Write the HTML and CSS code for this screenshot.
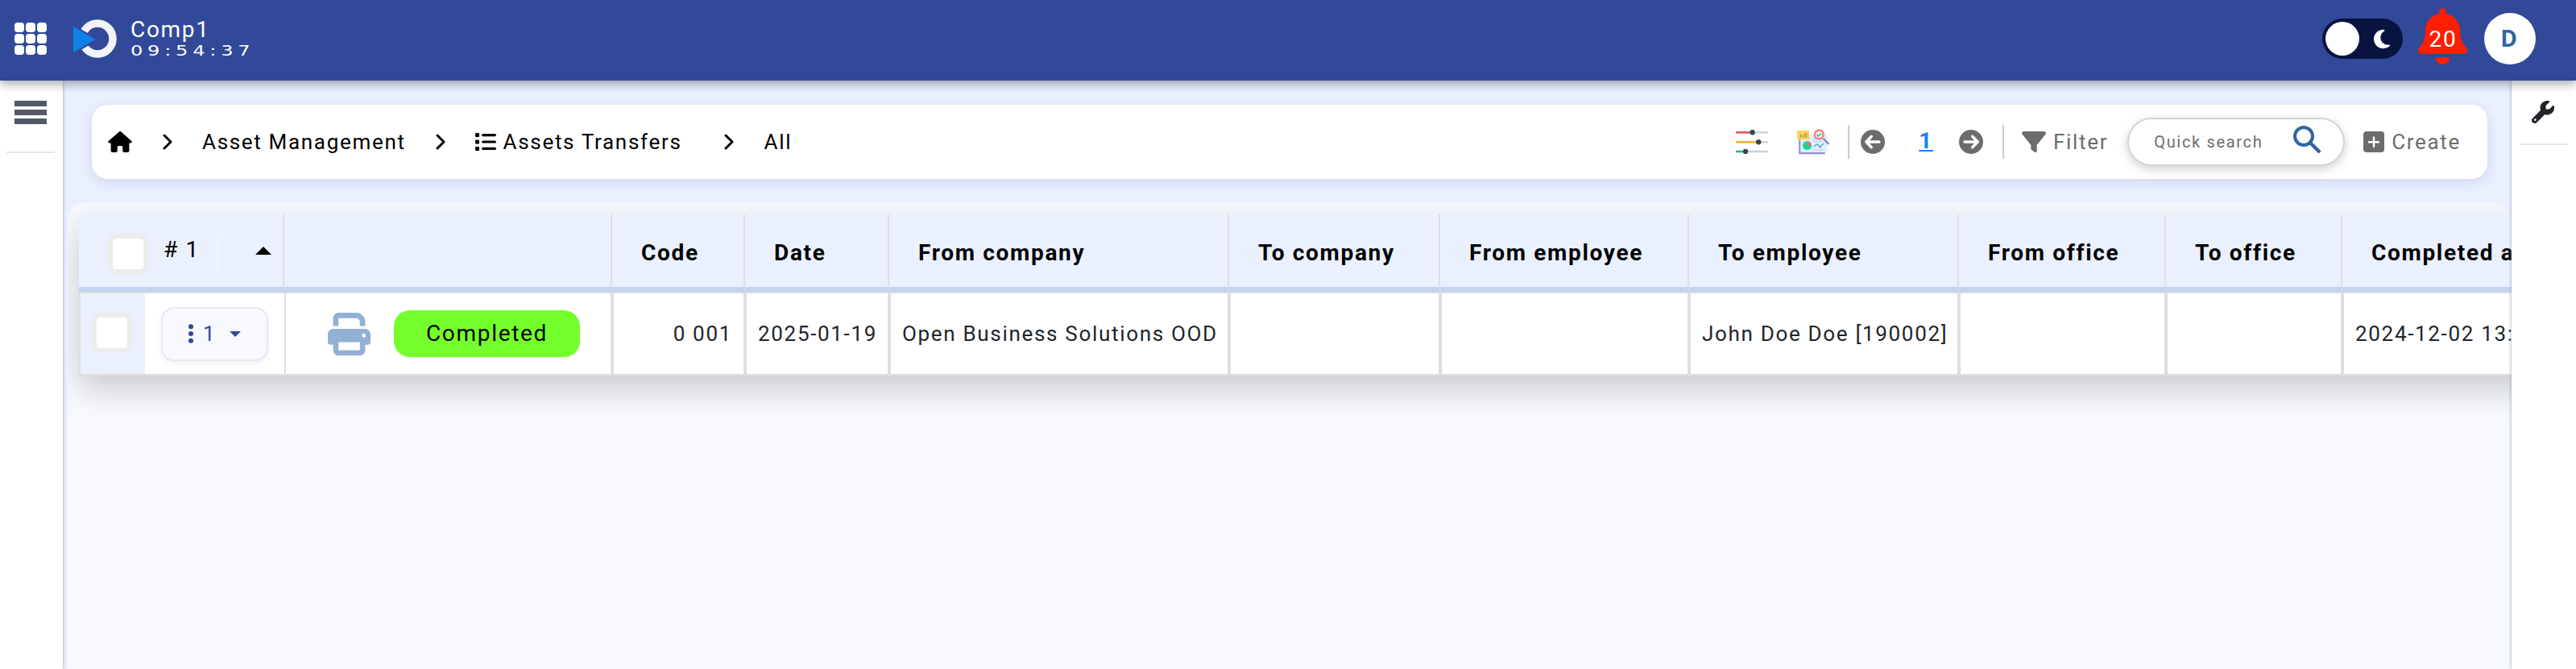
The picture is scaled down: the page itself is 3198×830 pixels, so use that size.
FILE: index.html
```html
<!DOCTYPE html>
<html lang="en">
  <head>
    <meta charset="UTF-8" />
    <meta name="viewport" content="width=device-width, initial-scale=1.0" />
    <title>Assets Transfers</title>
    <link rel="stylesheet" href="styles.css" />
  </head>
  <body>
    <header class="topbar">
      <svg class="apps" viewBox="0 0 40 40" fill="#fff">
        <rect x="0" y="0" width="12" height="12" rx="4" />
        <rect x="14" y="0" width="12" height="12" rx="4" />
        <rect x="28" y="0" width="12" height="12" rx="4" />
        <rect x="0" y="14" width="12" height="12" rx="4" />
        <rect x="14" y="14" width="12" height="12" rx="4" />
        <rect x="28" y="14" width="12" height="12" rx="4" />
        <rect x="0" y="28" width="12" height="12" rx="4" />
        <rect x="14" y="28" width="12" height="12" rx="4" />
        <rect x="28" y="28" width="12" height="12" rx="4" />
      </svg>
      <svg class="logo" viewBox="0 0 54 48">
        <circle cx="30" cy="24" r="19" fill="none" stroke="#f3f4f9" stroke-width="9.5" />
        <path d="M0 8.7 27.3 25 0 41.3z" fill="#324999" stroke="#324999" stroke-width="4" />
        <path d="M0 8.7 27.3 25 0 41.3z" fill="#1080e8" />
      </svg>
      <div class="brand">
        <span class="brand-name">Comp1</span>
        <span class="clock">09:54:37</span>
      </div>
      <div class="top-actions">
        <div class="toggle">
          <span class="knob"></span>
          <svg class="moon" viewBox="0 0 384 512" fill="#fff"><path d="M223.500 32C100 32 0 132.300 0 256S100 480 223.500 480c60.600 0 115.500-24.200 155.800-63.400c5-4.900 6.300-12.500 3.100-18.700s-10.100-9.700-17-8.500c-9.800 1.700-19.800 2.600-30.100 2.600c-96.900 0-175.500-78.800-175.500-176c0-65.800 36-123.100 89.300-153.300c6.100-3.500 9.200-10.500 7.700-17.300s-7.300-11.900-14.300-12.500c-6.300-.5-12.600-.8-19-.8z" /></svg>
        </div>
        <div class="bell">
          <svg viewBox="0 0 448 512" fill="#ff1e00"><path d="M224 0c-17.700 0-32 14.300-32 32l0 19.200C119 66 64 130.600 64 208l0 18.800c0 47-17.300 92.400-48.500 127.600l-7.400 8.300c-8.400 9.400-10.400 22.900-5.300 34.400S19.400 416 32 416l384 0c12.600 0 24-7.400 29.200-18.900s3.100-25-5.300-34.400l-7.400-8.300C401.300 319.200 384 273.900 384 226.800l0-18.800c0-77.400-55-142-128-156.800L256 32c0-17.700-14.300-32-32-32zm45.300 493.300c12-12 18.700-28.300 18.700-45.300l-64 0-64 0c0 17 6.700 33.300 18.700 45.300s28.300 18.700 45.300 18.700s33.300-6.700 45.300-18.700z" /></svg>
          <span class="bell-count">20</span>
        </div>
        <div class="avatar"><span>D</span></div>
      </div>
    </header>

    <div class="page">
      <aside class="side side-left">
        <div class="burger"><i></i><i></i><i></i></div>
        <hr />
      </aside>

      <main class="content">
        <nav class="toolbar">
          <div class="crumbs">
            <svg class="home" viewBox="0 0 576 512"><path d="M575.800 255.500c0 18-15 32.100-32 32.100l-32 0 .7 160.200c0 2.700-.2 5.400-.5 8.100l0 16.200c0 22.100-17.900 40-40 40l-16 0c-1.100 0-2.200 0-3.300-.1c-1.400 .1-2.800 .1-4.200 .1L416 512l-24 0c-22.100 0-40-17.900-40-40l0-24 0-64c0-17.700-14.300-32-32-32l-64 0c-17.700 0-32 14.300-32 32l0 64 0 24c0 22.100-17.900 40-40 40l-24 0-31.900 0c-1.500 0-3-.1-4.500-.2c-1.200 .1-2.400 .2-3.600 .2l-16 0c-22.100 0-40-17.900-40-40l0-112c0-.9 0-1.900 .1-2.800l0-69.700-32 0c-18 0-32-14-32-32.100c0-9 3-17 10-24L266.400 8c7-7 15-8 22-8s15 2 21 7L564.800 231.500c8 7 12 15 11 24z" /></svg>
            <svg class="chevron chevron-1" viewBox="0 0 12 20"><path d="M2 2l8 8-8 8" /></svg>
            <span class="crumb">Asset Management</span>
            <svg class="chevron chevron-2" viewBox="0 0 12 20"><path d="M2 2l8 8-8 8" /></svg>
            <svg class="list" viewBox="0 0 26 22">
              <rect x="0" y="0" width="5" height="5" rx="1" />
              <rect x="0" y="8.500" width="5" height="5" rx="1" />
              <rect x="0" y="17" width="5" height="5" rx="1" />
              <rect x="8" y="1" width="18" height="3.200" rx="1.600" />
              <rect x="8" y="9.400" width="18" height="3.200" rx="1.600" />
              <rect x="8" y="17.800" width="18" height="3.200" rx="1.600" />
            </svg>
            <span class="crumb">Assets Transfers</span>
            <svg class="chevron chevron-3" viewBox="0 0 12 20"><path d="M2 2l8 8-8 8" /></svg>
            <span class="crumb">All</span>
          </div>

          <div class="tools">
            <svg class="sliders" viewBox="0 0 40 30">
              <path d="M20 3.300h20M28 15.300h12M12 27h28" stroke="#ccd1de" stroke-width="2.400" />
              <path d="M0 3.300h20" stroke="#f0525a" stroke-width="2.600" />
              <path d="M0 15.300h28" stroke="#f6b02c" stroke-width="2.600" />
              <path d="M0 27h12" stroke="#1bbf86" stroke-width="2.600" />
              <circle cx="20.500" cy="3.300" r="3.200" fill="#36465a" />
              <circle cx="28.200" cy="15.300" r="3.200" fill="#36465a" />
              <circle cx="12" cy="27" r="3.200" fill="#36465a" />
            </svg>
            <svg class="report" viewBox="0 0 40 32">
              <path d="M3.300 10v20h31.400" fill="none" stroke="#9b8fd0" stroke-width="2.400" />
              <rect x="4.500" y="7" width="33" height="21" rx="1" fill="#dcf0fe" />
              <rect x="0" y="2" width="15" height="11" fill="#ffd25a" />
              <path d="M4.500 10.500v-4M11.500 10.500v-6" stroke="#4fb37c" stroke-width="1.300" />
              <path d="M7 10.500v-3M9.300 10.500v-5" stroke="#ef8b32" stroke-width="1.300" />
              <circle cx="12.500" cy="20.500" r="5.500" fill="#0fdc96" />
              <path d="M12.500 20.500V15a5.500 5.500 0 0 1 5.500 5.500z" fill="#ff6c6c" />
              <path d="M20 12.500h10M20 15.500h12M20 26h13" stroke="#a8d4fb" stroke-width="1.200" />
              <path d="M21 22l3.500-3.500 4 4 4.500-4.500" fill="none" stroke="#3aa9c9" stroke-width="1.200" />
              <circle cx="28.500" cy="22.500" r="1.300" fill="#ff6c6c" />
              <path d="M32.500 12l7 7" stroke="#8d80c4" stroke-width="2.400" />
              <circle cx="27.300" cy="7" r="5.400" fill="#f4fbff" stroke="#ff7f7c" stroke-width="2.600" />
              <path d="M24.500 7l2 2 3.500-3.500" fill="none" stroke="#12c78d" stroke-width="1.500" />
            </svg>
            <span class="divider"></span>
            <svg class="arrow arrow-prev" viewBox="0 0 30 30">
              <circle class="disc" cx="15" cy="15" r="15" />
              <path d="M23 15H8M13.300 8.300 6.800 15l6.500 6.700" />
            </svg>
            <span class="page-no">1</span>
            <svg class="arrow arrow-next" viewBox="0 0 30 30">
              <circle class="disc" cx="15" cy="15" r="15" />
              <path d="M7 15h15M16.700 8.300l6.500 6.700-6.500 6.700" />
            </svg>
            <span class="divider divider-2"></span>
            <svg class="funnel" viewBox="0 32 512 448" fill="#6c6c6c"><path d="M3.900 54.900C10.500 40.900 24.500 32 40 32l432 0c15.500 0 29.500 8.900 36.100 22.900s4.600 30.500-5.200 42.500L320 320.900 320 448c0 12.100-6.800 23.200-17.700 28.600s-23.800 4.300-33.500-3l-64-48c-8.100-6-12.800-15.500-12.800-25.600l0-79.100L9 97.300C-.7 85.400-2.800 68.800 3.900 54.900z" /></svg>
            <span class="tool-text">Filter</span>
            <div class="search">
              <span class="search-text">Quick search</span>
              <svg class="search-icon" viewBox="0 0 35 35" fill="none" stroke="#30669c">
                <circle cx="13" cy="13" r="11" stroke-width="4" />
                <path d="M21.500 21.500l11.500 11.500" stroke-width="4.400" />
              </svg>
            </div>
            <svg class="plus" viewBox="0 0 26 26">
              <rect width="26" height="26" rx="4" fill="#6c6c6c" />
              <path d="M13 7.500v11.500M7 13.300h12" stroke="#fff" stroke-width="2.400" stroke-linecap="round" />
            </svg>
            <span class="tool-text">Create</span>
          </div>
        </nav>

        <section class="panel">
          <div class="grid">
            <div class="row head">
              <div class="cell sort">
                <span class="check"></span>
                <span class="sort-text"># 1</span>
                <span class="sort-line"></span>
                <svg class="sort-arrow" viewBox="0 0 20 10"><path d="M0 10 10 0l10 10z" /></svg>
              </div>
              <div class="cell"></div>
              <div class="cell"><span>Code</span></div>
              <div class="cell"><span>Date</span></div>
              <div class="cell"><span>From company</span></div>
              <div class="cell"><span>To company</span></div>
              <div class="cell"><span>From employee</span></div>
              <div class="cell"><span>To employee</span></div>
              <div class="cell"><span>From office</span></div>
              <div class="cell"><span>To office</span></div>
              <div class="cell"><span>Completed at</span></div>
            </div>
            <div class="row body">
              <div class="cell pick">
                <div class="pick-box"><span class="check"></span></div>
                <div class="menu-btn">
                  <svg class="dots" viewBox="0 0 6 24" fill="#324999">
                    <circle cx="3" cy="3.200" r="3" />
                    <circle cx="3" cy="12" r="3" />
                    <circle cx="3" cy="20.800" r="3" />
                  </svg>
                  <span class="menu-no">1</span>
                  <svg class="caret" viewBox="0 0 14 7" fill="#324999"><path d="M0 0h14L7 7z" /></svg>
                </div>
              </div>
              <div class="cell state">
                <svg class="printer" viewBox="0 0 512 512" fill="#92b1d4"><path d="M128 0C92.700 0 64 28.700 64 64l0 96 64 0 0-96 226.700 0L384 93.300l0 66.700 64 0 0-66.700c0-17-6.700-33.300-18.700-45.300L400 18.700C388 6.700 371.700 0 354.700 0L128 0zM384 352l0 32 0 64-256 0 0-64 0-16 0-16 256 0zm64 32l32 0c17.700 0 32-14.300 32-32l0-96c0-35.300-28.700-64-64-64L64 192c-35.300 0-64 28.700-64 64l0 96c0 17.700 14.300 32 32 32l32 0 0 64c0 35.300 28.700 64 64 64l256 0c35.300 0 64-28.700 64-64l0-64zM432 248a24 24 0 1 1 0 48 24 24 0 1 1 0-48z" /></svg>
                <span class="badge">Completed</span>
              </div>
              <div class="cell num"><span>0 001</span></div>
              <div class="cell"><span>2025-01-19</span></div>
              <div class="cell"><span>Open Business Solutions OOD</span></div>
              <div class="cell"></div>
              <div class="cell"></div>
              <div class="cell"><span>John Doe Doe [190002]</span></div>
              <div class="cell"></div>
              <div class="cell"></div>
              <div class="cell"><span>2024-12-02 13:09:21</span></div>
            </div>
          </div>
        </section>
      </main>

      <aside class="side side-right">
        <svg class="wrench" viewBox="0 0 512 512" fill="#212529"><path d="M352 320c88.400 0 160-71.600 160-160c0-15.300-2.200-30.100-6.200-44.200c-3.100-10.800-16.400-13.200-24.300-5.300l-76.800 76.800c-3 3-7.100 4.700-11.300 4.700L336 192c-8.800 0-16-7.200-16-16l0-57.400c0-4.200 1.700-8.300 4.700-11.300l76.800-76.800c7.900-7.900 5.400-21.200-5.300-24.300C382.100 2.200 367.300 0 352 0C263.600 0 192 71.600 192 160c0 19.100 3.400 37.500 9.500 54.500L19.900 396.100C7.200 408.800 0 426.100 0 444.100C0 481.600 30.400 512 67.900 512c18 0 35.300-7.200 48-19.900L297.500 310.500c17 6.200 35.400 9.500 54.500 9.500zM80 408a24 24 0 1 1 0 48 24 24 0 1 1 0-48z" /></svg>
        <hr />
      </aside>
    </div>
  </body>
</html>
```
FILE: styles.css
```css
* {
  box-sizing: border-box;
}
body {
  margin: 0;
  height: 830px;
  overflow: hidden;
  display: flex;
  flex-direction: column;
  font-family: Roboto, "Liberation Sans", sans-serif;
  font-size: 26px;
  line-height: 40px;
  letter-spacing: 1.68px;
  color: #212529;
  background-color: #ebf0ff;
}
svg {
  display: block;
  flex: none;
}
span {
  white-space: nowrap;
}

/* top bar */
.topbar {
  position: relative;
  z-index: 2;
  flex: none;
  display: flex;
  align-items: center;
  height: 100px;
  padding: 0 50px 4px 18px;
  background-color: #324999;
  color: #fff;
  box-shadow: 0 4px 12px rgba(0, 0, 0, 0.35);
}
.apps {
  width: 40px;
  height: 40px;
}
.logo {
  width: 54px;
  height: 48px;
  margin-left: 33px;
}
.brand {
  display: flex;
  flex-direction: column;
  margin-left: 17px;
  padding-bottom: 2px;
}
.brand-name {
  font-size: 28px;
  line-height: 32px;
}
.clock {
  font-family: "DejaVu Sans", sans-serif;
  font-size: 18px;
  line-height: 20px;
  letter-spacing: 4.3px;
  transform: scaleX(1.34);
  transform-origin: left;
}
.top-actions {
  display: flex;
  align-items: center;
  margin-left: auto;
}
.toggle {
  display: flex;
  align-items: center;
  width: 100px;
  height: 50px;
  padding-left: 4px;
  border-radius: 25px;
  background-color: #09133f;
}
.knob {
  width: 42px;
  height: 42px;
  border-radius: 50%;
  background-color: #fff;
}
.moon {
  width: 20px;
  height: 27px;
  margin-left: 18px;
}
.bell {
  display: grid;
  width: 61px;
  margin: 0 21px 6px 19px;
}
.bell > * {
  grid-area: 1 / 1;
}
.bell svg {
  width: 61px;
  height: 70px;
}
.bell-count {
  place-self: center;
  padding: 7px 0 0 1px;
  font-size: 28px;
}
.avatar {
  display: flex;
  align-items: center;
  justify-content: center;
  width: 64px;
  height: 64px;
  padding: 0 3px 2px 0;
  border-radius: 50%;
  background-color: #fff;
  color: #30669c;
  font-family: "Open Sans", sans-serif;
  font-size: 28px;
  font-weight: 700;
  letter-spacing: 0;
}

/* side bars */
.page {
  flex: 1;
  display: flex;
  min-height: 0;
}
.side {
  position: relative;
  z-index: 1;
  flex: none;
  background-color: #fff;
  box-shadow: 0 0 4px #8fa5bd;
}
.side hr {
  height: 2px;
  margin: 0;
  border: 0;
  background-color: #e6e6e6;
}
.side-left {
  width: 78px;
  padding: 25px 10px 0 8px;
}
.side-right {
  width: 80px;
  padding: 25px 10px 0;
}
.burger {
  display: grid;
  gap: 4px;
  margin: 0 10px 34px;
}
.burger i {
  height: 7px;
  background-color: #525a66;
}
.wrench {
  width: 28px;
  height: 28px;
  margin: 0 0 25px 15px;
}

/* toolbar */
.content {
  flex: 1;
  display: flex;
  flex-direction: column;
  min-width: 0;
}
.toolbar {
  flex: none;
  display: flex;
  align-items: center;
  justify-content: space-between;
  height: 92px;
  margin: 30px 30px 0 36px;
  padding: 0 33px 0 20px;
  border-radius: 20px;
  background-color: #fff;
  box-shadow: 0 4px 16px rgba(50, 73, 120, 0.16);
}
.crumbs,
.tools {
  display: flex;
  align-items: center;
}
.crumbs {
  color: #000;
}
.home {
  width: 30px;
  height: 26px;
}
.chevron {
  width: 12px;
  height: 20px;
  fill: none;
  stroke: #000;
  stroke-width: 3;
  stroke-linecap: round;
  stroke-linejoin: round;
}
.chevron-1 {
  margin: 0 37px 0 38px;
}
.chevron-2 {
  margin: 0 37px;
}
.chevron-3 {
  margin: 0 37px 0 53px;
}
.list {
  width: 26px;
  height: 22px;
  margin-right: 9px;
}
.sliders {
  width: 40px;
  height: 30px;
}
.report {
  width: 40px;
  height: 32px;
  margin-left: 36px;
}
.divider {
  width: 2px;
  height: 42px;
  margin: 0 14px 0 23px;
  background-color: #ccc;
}
.divider-2 {
  margin: 0 22px 0 24px;
}
.arrow {
  width: 30px;
  height: 30px;
  fill: none;
  stroke: #fff;
  stroke-width: 3.4;
  stroke-linecap: round;
  stroke-linejoin: round;
}
.disc {
  fill: #6c6c6c;
  stroke: none;
}
.page-no {
  margin: 0 32px 0 42px;
  padding-bottom: 2px;
  font-size: 28px;
  font-weight: 700;
  color: #1a80ff;
  text-decoration: underline;
}
.funnel {
  width: 30px;
  height: 26px;
}
.tool-text {
  margin-left: 9px;
  color: #6c6c6c;
}
.search {
  display: flex;
  align-items: center;
  justify-content: space-between;
  width: 270px;
  height: 60px;
  margin: 0 23px 0 24px;
  padding: 0 27px 0 31px;
  border: 2px solid #d3d3d3;
  border-radius: 30px;
  box-shadow: 0 4px 12px rgba(0, 0, 0, 0.18);
}
.search-text {
  font-size: 20px;
  letter-spacing: 1.68px;
  color: #6c6c6c;
}
.search-icon {
  width: 35px;
  height: 35px;
  margin-bottom: 6px;
}
.plus {
  width: 26px;
  height: 26px;
}

/* table */
.panel {
  flex: 1;
  margin: 30px 0 0 6px;
  padding: 14px 0 0 14px;
  border-radius: 20px 20px 0 0;
  background-color: #f9faff;
  overflow: hidden;
}
.grid {
  width: 3300px;
  box-shadow: 0 16px 40px rgba(0, 0, 0, 0.2);
}
.row {
  display: grid;
  grid-template-columns: 255px 407px 165px 179px 422px 262px 309px 335px 257px 219px 1fr;
}
.cell {
  display: flex;
  align-items: center;
}
.head .cell {
  height: 96px;
  padding: 5px 0 0 36px;
  border-right: 2px solid #dedede;
  border-bottom: 6px solid #c3d4f0;
  background-color: #ebf0ff;
  color: #000;
  font-size: 28px;
  font-weight: 700;
}
.head .sort {
  align-items: flex-start;
  padding: 24px 14px 0 36px;
  font-weight: 400;
}
.check {
  flex: none;
  width: 50px;
  height: 50px;
  border: 6px solid #ececec;
  border-radius: 10px;
  background-color: #fff;
}
.sort-text {
  margin-left: 19px;
}
.sort-line {
  width: 2px;
  height: 48px;
  margin-left: auto;
  background-color: #f1f4fe;
}
.sort-arrow {
  width: 20px;
  height: 10px;
  margin: 16px 0 0 46px;
}
.body .cell {
  height: 104px;
  padding: 0 14px;
  border: 2px solid #dedede;
  background-color: #fff;
}
.body .pick {
  padding: 0;
  border-right: 0;
}
.pick-box {
  display: flex;
  align-items: center;
  justify-content: center;
  flex: none;
  width: 80px;
  height: 100px;
  padding: 0 2px 2px 0;
  background-color: #ebf0ff;
}
.menu-btn {
  display: flex;
  align-items: center;
  width: 133px;
  height: 67px;
  margin-left: 20px;
  padding-left: 32px;
  border: 2px solid #e5e8f4;
  border-radius: 16px;
  background-color: #f8f9fe;
  color: #324999;
  box-shadow: 0 4px 8px rgba(0, 0, 0, 0.05);
}
.dots {
  width: 6px;
  height: 24px;
}
.menu-no {
  margin-left: 12px;
}
.caret {
  width: 14px;
  height: 7px;
  margin-left: 17px;
}
.body .state {
  padding-left: 52px;
}
.printer {
  width: 53px;
  height: 53px;
}
.badge {
  width: 231px;
  height: 58px;
  margin-left: 29px;
  border-radius: 20px;
  background-color: #73ff2b;
  color: #000;
  font-size: 28px;
  line-height: 58px;
  text-align: center;
}
.body .num {
  justify-content: flex-end;
}
```
